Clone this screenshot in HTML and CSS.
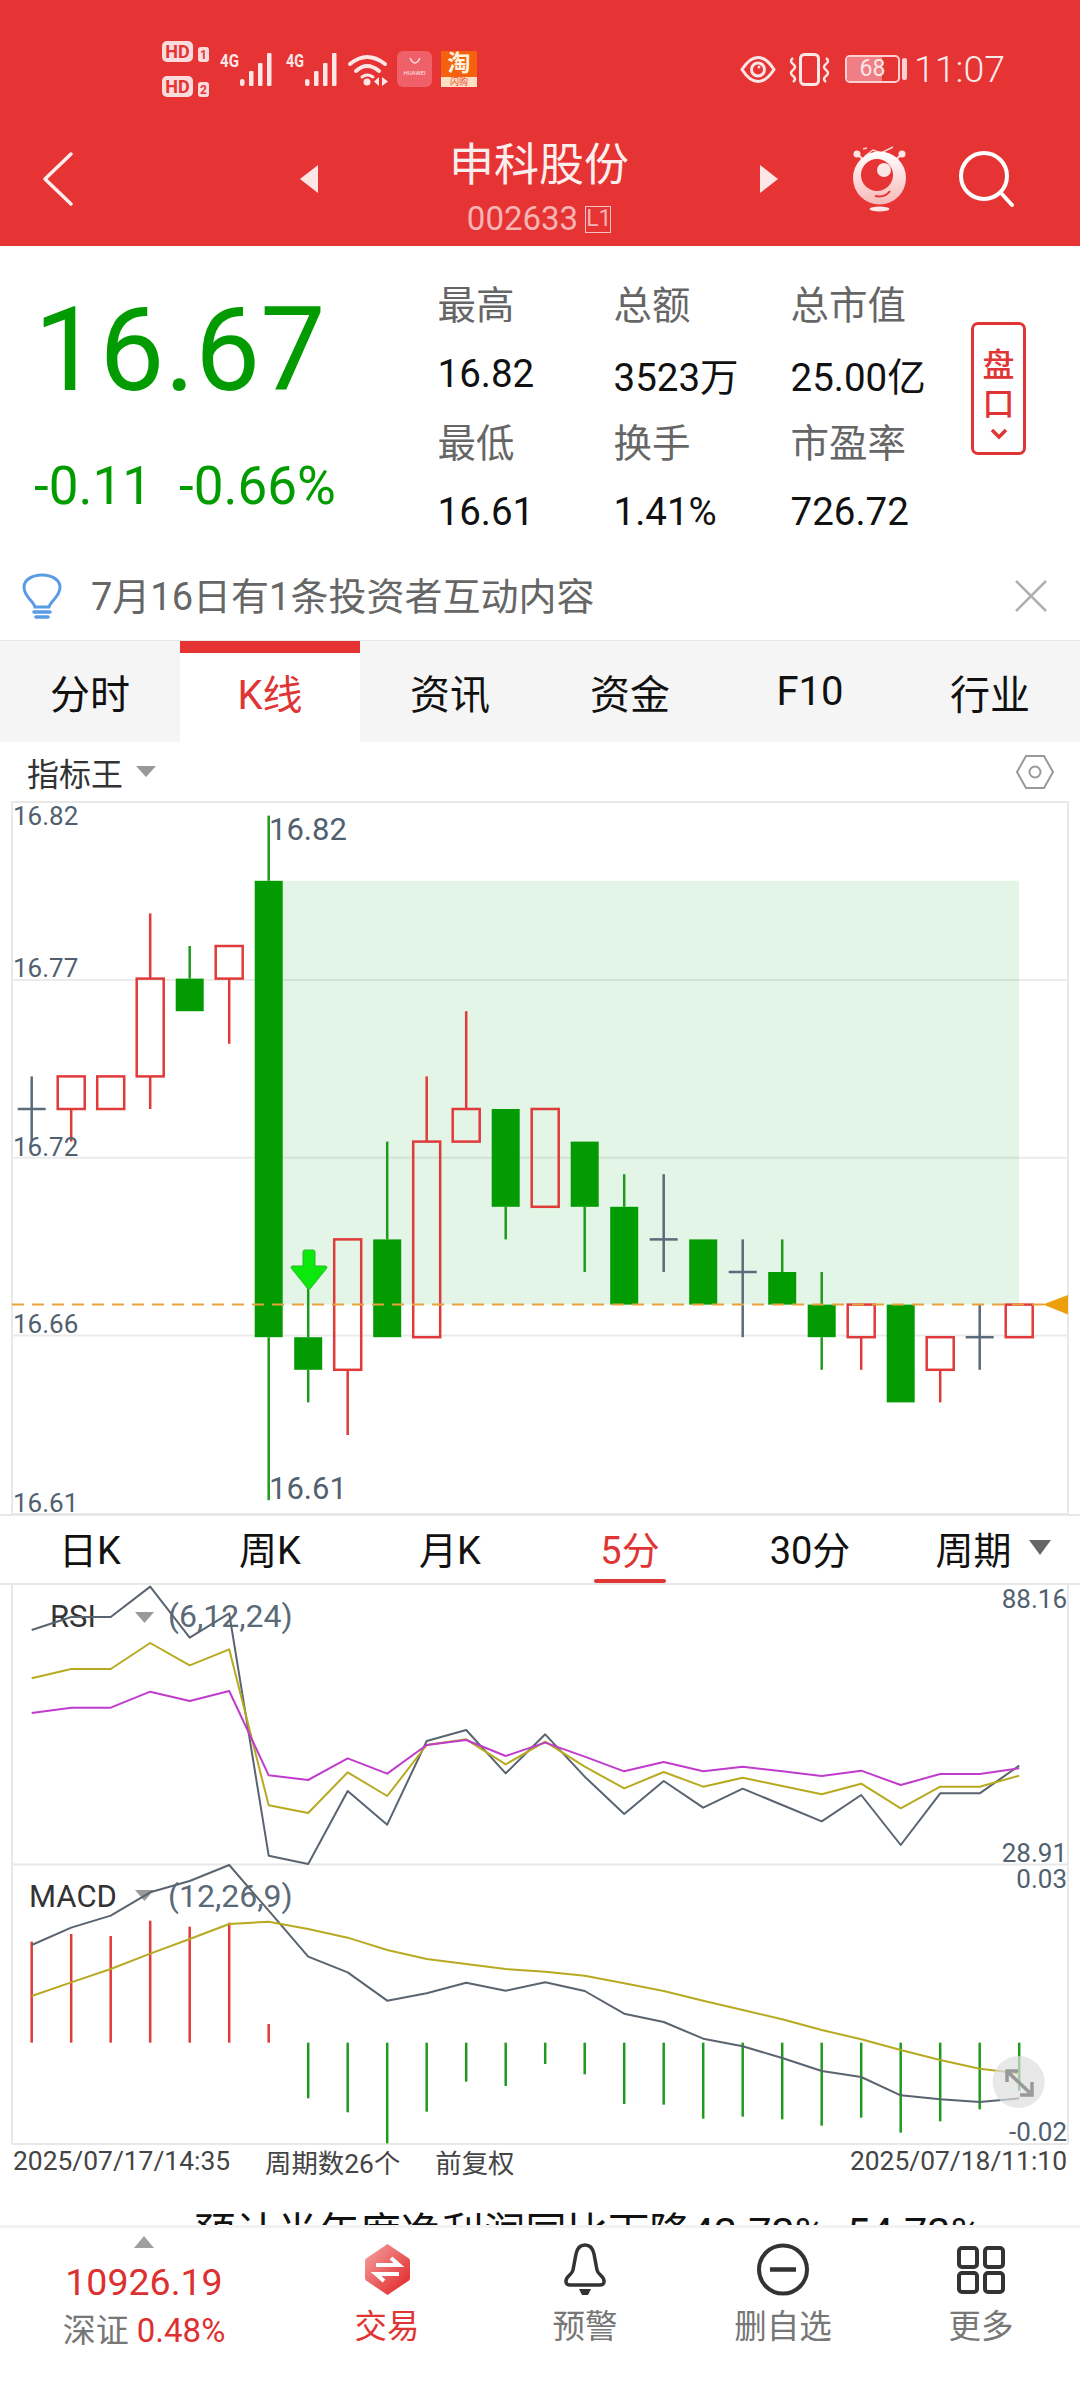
FILE: index.html
```html
<!DOCTYPE html>
<html>
  <head>
    <title>申科股份</title>
    <link rel="stylesheet" href="styles.css">
  </head>
  <body>
    <header class="top">
      <div class="status">
        <svg class="hd" width="47" height="56" viewBox="0 0 47 56">
          <rect width="31" height="21" rx="5" fill="#fbdcdc"/>
          <text x="15.5" y="17" class="hd-text">HD</text>
          <rect x="36" y="6" width="11" height="15" rx="3" fill="#fbdcdc"/>
          <text x="41.5" y="18" class="hd-num">1</text>
          <rect y="35" width="31" height="21" rx="5" fill="#fbdcdc"/>
          <text x="15.5" y="52" class="hd-text">HD</text>
          <rect x="36" y="41" width="11" height="15" rx="3" fill="#fbdcdc"/>
          <text x="41.5" y="53" class="hd-num">2</text>
        </svg>
        <svg class="sig-a" width="54" height="33" viewBox="0 0 54 33">
          <text x="0" y="14" class="four-g" textLength="19" lengthAdjust="spacingAndGlyphs">4G</text>
          <rect x="20" y="26" width="4.500" height="7" rx="2" fill="#fde6e6"/>
          <rect x="29" y="18" width="4.500" height="15" rx="1" fill="#fde6e6"/>
          <rect x="38" y="10" width="4.500" height="23" rx="1" fill="#fde6e6"/>
          <rect x="47" y="0" width="4.500" height="33" rx="1" fill="#fde6e6"/>
        </svg>
        <svg class="sig-b" width="53" height="33" viewBox="0 0 53 33">
          <text x="0" y="14" class="four-g" textLength="18" lengthAdjust="spacingAndGlyphs">4G</text>
          <rect x="19" y="26" width="4.500" height="7" rx="2" fill="#fde6e6"/>
          <rect x="28" y="18" width="4.500" height="15" rx="1" fill="#fde6e6"/>
          <rect x="37" y="10" width="4.500" height="23" rx="1" fill="#fde6e6"/>
          <rect x="46" y="0" width="4.500" height="33" rx="1" fill="#fde6e6"/>
        </svg>
        <svg class="wifi" width="41" height="33" viewBox="0 0 41 33" fill="none" stroke="#fde6e6" stroke-width="4" stroke-linecap="round">
          <path d="M2 11Q19 -3 37 11"/>
          <path d="M8 18Q19 8 31 18"/>
          <path d="M14 24Q19 20 25 24" stroke-width="3"/>
          <circle cx="19" cy="29" r="3.5" fill="#fde6e6" stroke="none"/>
          <path d="M31 24v9l-5-4.500zM34 24v9l6-4.500z" fill="#fde6e6" stroke="none"/>
        </svg>
        <div class="app-huawei">
          <svg width="14" height="8" viewBox="0 0 14 8" fill="none" stroke="#fde6e6" stroke-width="1.500"><path d="M2 1Q7 11 12 1"/></svg>
          <span>HUAWEI</span>
        </div>
        <div class="app-tao">
          <span class="tao-main">淘</span>
          <span class="tao-sub">闪购</span>
        </div>
        <div class="status-right">
          <svg width="36" height="27" viewBox="0 0 36 27" fill="none" stroke="#fde6e6" stroke-width="3">
            <path d="M2 13.500C8 4 14 1.500 18 1.500C22 1.500 28 4 34 13.500C28 23 22 25.500 18 25.500C14 25.500 8 23 2 13.500Z"/>
            <circle cx="18" cy="13.500" r="6.500"/>
            <circle cx="19" cy="11" r="1.500" fill="#fde6e6" stroke="none"/>
          </svg>
          <svg class="vib" width="43" height="33" viewBox="0 0 43 33" fill="none" stroke="#fde6e6" stroke-width="3">
            <rect x="12.500" y="1.500" width="18" height="30" rx="4"/>
            <path d="M5 5q-4 3 0 6t0 6t0 6t0 6" stroke-width="2.500"/>
            <path d="M38 5q4 3 0 6t0 6t0 6t0 6" stroke-width="2.500"/>
          </svg>
          <div class="battery">
            <div class="battery-body"><span class="battery-fill"></span><span class="battery-num">68</span></div>
            <span class="battery-nub"></span>
          </div>
          <span class="clock">11:07</span>
        </div>
      </div>
      <div class="nav">
        <svg class="back" width="30" height="54" viewBox="0 0 30 54" fill="none" stroke="#fdeeee" stroke-width="3.500" stroke-linecap="round" stroke-linejoin="round">
          <path d="M28 2L2 27L28 52"/>
        </svg>
        <span class="tri tri-left"></span>
        <div class="title-block">
          <div class="title">申科股份</div>
          <div class="code">002633<span class="level">L1</span></div>
        </div>
        <span class="tri tri-right"></span>
        <svg class="mascot" width="53" height="67" viewBox="0 0 53 67">
          <defs>
            <linearGradient id="mascotBody" x1="0" y1="0" x2="0" y2="1">
              <stop offset="0" stop-color="#ffffff"/>
              <stop offset="1" stop-color="#f8b8b8"/>
            </linearGradient>
          </defs>
          <path d="M10 3L14 2M12 10L20 4L28 7L40 1" fill="none" stroke="#fbd5d5" stroke-width="1.500"/>
          <path d="M4 8L13 16M49 8L40 16" stroke="#fde0e0" stroke-width="2"/>
          <circle cx="4" cy="8" r="3.500" fill="#fde6e6"/>
          <circle cx="49" cy="8" r="3.500" fill="#fde6e6"/>
          <circle cx="26.500" cy="32" r="26.500" fill="url(#mascotBody)"/>
          <circle cx="24" cy="29" r="16" fill="#e63333"/>
          <circle cx="31" cy="24" r="7" fill="#fde6e6"/>
          <path d="M22 50Q32 52 37 45" fill="none" stroke="#e63333" stroke-width="2"/>
          <ellipse cx="26.500" cy="63" rx="10" ry="2.500" fill="#fde6e6"/>
        </svg>
        <svg class="search" width="55" height="56" viewBox="0 0 55 56" fill="none" stroke="#fff" stroke-width="4" stroke-linecap="round">
          <circle cx="25" cy="25" r="23"/>
          <path d="M42 42L53 54"/>
        </svg>
      </div>
    </header>

    <section class="quote">
      <div class="price-col">
        <div class="price">16.67</div>
        <div class="delta"><span>-0.11</span><span class="delta-pct">-0.66%</span></div>
      </div>
      <div class="stats">
        <span class="stat-label">最高</span><span class="stat-label">总额</span><span class="stat-label">总市值</span>
        <span class="stat-value">16.82</span><span class="stat-value">3523万</span><span class="stat-value">25.00亿</span>
        <span class="stat-label">最低</span><span class="stat-label">换手</span><span class="stat-label">市盈率</span>
        <span class="stat-value">16.61</span><span class="stat-value">1.41%</span><span class="stat-value">726.72</span>
      </div>
      <div class="pankou">
        <span>盘</span>
        <span>口</span>
        <svg width="18" height="12" viewBox="0 0 18 12" fill="none" stroke="#e03535" stroke-width="3.500"><path d="M2 2L9 9L16 2"/></svg>
      </div>
    </section>

    <section class="notice">
      <svg width="40" height="46" viewBox="0 0 40 46" fill="none" stroke="#5a9be6" stroke-width="3" stroke-linecap="round">
        <path d="M13 34C11 27 2 24 2 14C2 7 10 2 20 2C30 2 38 7 38 14C38 24 29 27 27 34Z"/>
        <path d="M12 39H28M14 44H26" stroke-width="3.500"/>
      </svg>
      <span class="notice-text">7月16日有1条投资者互动内容</span>
      <svg class="notice-close" width="32" height="30" viewBox="0 0 32 30" stroke="#b0b0b0" stroke-width="2.500"><path d="M1 0L31 30M31 0L1 30"/></svg>
    </section>

    <nav class="tabs">
      <a class="tab">分时</a>
      <a class="tab active">K线</a>
      <a class="tab">资讯</a>
      <a class="tab">资金</a>
      <a class="tab">F10</a>
      <a class="tab">行业</a>
    </nav>

    <div class="toolbar">
      <span>指标王</span>
      <span class="caret"></span>
      <svg class="hex" width="38" height="34" viewBox="0 0 38 34" fill="none" stroke="#999" stroke-width="2">
        <path d="M10 1H28L37 17L28 33H10L1 17Z"/>
        <circle cx="19" cy="17" r="5.500"/>
      </svg>
    </div>

    <div class="chart"><svg id="klineChart" width="1080" height="713" viewBox="0 801 1080 713"></svg></div>

    <div class="periods">
      <a class="period">日K</a>
      <a class="period">周K</a>
      <a class="period">月K</a>
      <a class="period active">5分</a>
      <a class="period">30分</a>
      <a class="period period-more">周期<span class="period-caret"></span></a>
    </div>

    <div class="panel"><svg id="rsiChart" width="1080" height="280" viewBox="0 1585 1080 280"></svg></div>
    <div class="panel"><svg id="macdChart" width="1080" height="279" viewBox="0 1865 1080 279"></svg></div>

    <div class="dates">
      <span>2025/07/17/14:35</span>
      <span class="dates-count">周期数26个</span>
      <span class="dates-fq">前复权</span>
      <span class="dates-end">2025/07/18/11:10</span>
    </div>

    <div class="news"><span>预计半年度净利润同比下降43.73%- 54.73%</span></div>

    <footer class="bottom">
      <div class="index">
        <span class="index-tri"></span>
        <div class="index-value">10926.19</div>
        <div class="index-name">深证 <span>0.48%</span></div>
      </div>
      <a class="bottom-item active">
        <svg width="47" height="53" viewBox="0 0 47 53">
          <defs>
            <linearGradient id="tradeFill" x1="0" y1="0" x2="1" y2="1">
              <stop offset="0" stop-color="#f5a5a5"/>
              <stop offset="1" stop-color="#e01f1f"/>
            </linearGradient>
          </defs>
          <path d="M23.500 1L45 15.500A4 4 0 0 1 46 18V35A4 4 0 0 1 45 37.500L23.500 52L2 37.500A4 4 0 0 1 1 35V18A4 4 0 0 1 2 15.500Z" fill="url(#tradeFill)"/>
          <path d="M12 22H35L27 15M35 31H12L20 38" fill="none" stroke="#fff" stroke-width="4"/>
        </svg>
        <span>交易</span>
      </a>
      <a class="bottom-item">
        <svg width="44" height="53" viewBox="0 0 44 53" fill="none" stroke="#333" stroke-width="3.500" stroke-linejoin="round">
          <path d="M22 2C27 2 30 6 31 11L34 27C35 32 41 33 41 38V39C41 41 39 42 37 42H7C5 42 3 41 3 39V38C3 33 9 32 10 27L13 11C14 6 17 2 22 2Z"/>
          <path d="M16 46H28L25 52H19Z" fill="#333" stroke="none"/>
        </svg>
        <span>预警</span>
      </a>
      <a class="bottom-item">
        <svg width="52" height="53" viewBox="0 0 52 53" fill="none" stroke="#333" stroke-width="4">
          <circle cx="26" cy="26.500" r="24"/>
          <path d="M13 26.500H39" stroke-width="4.500"/>
        </svg>
        <span>删自选</span>
      </a>
      <a class="bottom-item">
        <svg width="48" height="53" viewBox="0 0 48 53" fill="none" stroke="#333" stroke-width="4">
          <rect x="2" y="5" width="18" height="19" rx="3"/>
          <rect x="28" y="5" width="18" height="19" rx="3"/>
          <rect x="2" y="30" width="18" height="19" rx="3"/>
          <rect x="28" y="30" width="18" height="19" rx="3"/>
        </svg>
        <span>更多</span>
      </a>
    </footer>
    <script src="chart.js"></script>
  </body>
</html>
```

FILE: styles.css
```css
* {
  margin: 0;
  padding: 0;
  box-sizing: border-box;
}

html, body {
  height: 100%;
  overflow: hidden;
}

body {
  font-family: Roboto, 'Noto Sans CJK SC', sans-serif;
  width: 1080px;
  height: 2400px;
  background: #fff;
  color: #111;
  display: flex;
  flex-direction: column;
}

svg {
  display: block;
  flex-shrink: 0;
  overflow: visible;
}

/* red header */
.top {
  height: 246px;
  background: #e63333;
  flex-shrink: 0;
}

.status {
  height: 112px;
  padding: 26px 75px 0 162px;
  display: flex;
  align-items: center;
}

.hd-text {
  font: 700 18px Roboto, sans-serif;
  fill: #e63333;
  text-anchor: middle;
}

.hd-num {
  font: 700 12px Roboto, sans-serif;
  fill: #e63333;
  text-anchor: middle;
}

.four-g {
  font: 700 18px Roboto, sans-serif;
  fill: #fde6e6;
}

.sig-a {
  margin-left: 11px;
}

.sig-b {
  margin-left: 12px;
}

.wifi {
  margin-left: 9px;
}

.app-huawei {
  width: 35px;
  height: 36px;
  margin-left: 8px;
  border-radius: 6px;
  background: #ef6068;
  display: flex;
  flex-direction: column;
  align-items: center;
  color: #fde6e6;
  padding-top: 6px;
}

.app-huawei span {
  font-size: 6px;
  line-height: 10px;
  margin-top: 3px;
  white-space: nowrap;
}

.app-tao {
  width: 36px;
  height: 36px;
  margin-left: 9px;
  background: #f4610f;
  display: flex;
  flex-direction: column;
  align-items: center;
  overflow: hidden;
}

.tao-main {
  font-size: 23px;
  line-height: 26px;
  font-weight: 700;
  color: #fff3dd;
}

.tao-sub {
  width: 100%;
  height: 10px;
  background: #fde0c5;
  color: #e64a2a;
  font-size: 9px;
  line-height: 10px;
  text-align: center;
}

.status-right {
  margin-left: auto;
  display: flex;
  align-items: center;
}

.vib {
  margin-left: 12px;
}

.battery {
  margin-left: 14px;
  display: flex;
  align-items: center;
}

.battery-body {
  width: 55px;
  height: 28px;
  border: 2px solid #fbd0d0;
  border-radius: 5px;
  position: relative;
  overflow: hidden;
}

.battery-fill {
  display: block;
  width: 68%;
  height: 100%;
  background: #ef7f85;
}

.battery-num {
  position: absolute;
  inset: 0;
  text-align: center;
  font-size: 23px;
  line-height: 24px;
  color: #fde6e6;
}

.battery-nub {
  width: 5px;
  height: 22px;
  margin-left: 2px;
  border-radius: 2px;
  background: #fbd0d0;
}

.clock {
  margin-left: 7px;
  font-size: 37.5px;
  font-weight: 300;
  color: #fdeaea;
}

.nav {
  height: 134px;
  padding-left: 43px;
  display: flex;
  align-items: center;
}

.tri {
  width: 0;
  height: 0;
  border-top: 14px solid transparent;
  border-bottom: 14px solid transparent;
}

.tri-left {
  margin-left: 227px;
  border-right: 18px solid #fde6e6;
}

.tri-right {
  border-left: 18px solid #fde6e6;
}

.title-block {
  width: 442px;
  align-self: flex-start;
  padding-top: 28px;
  display: flex;
  flex-direction: column;
  align-items: center;
}

.title {
  font-size: 45px;
  line-height: 52px;
  color: #fdeeee;
}

.code {
  margin-top: 8px;
  font-size: 33px;
  line-height: 38px;
  color: #f6b4b4;
  display: flex;
  align-items: center;
}

.level {
  margin-left: 7px;
  width: 26px;
  height: 27px;
  border: 1.500px solid #f6c4c4;
  font-size: 23px;
  line-height: 24px;
  text-align: center;
}

.mascot {
  margin-left: 75px;
}

.search {
  margin-left: 53px;
}

/* price block */
.quote {
  height: 306px;
  display: flex;
  flex-shrink: 0;
}

.price-col {
  width: 437.5px;
  padding: 33px 0 0 34px;
  color: #029c02;
}

.price {
  font-size: 116px;
  line-height: 142px;
  white-space: nowrap;
}

.delta {
  margin-top: 35px;
  font-size: 53px;
  line-height: 60px;
  white-space: nowrap;
}

.delta-pct {
  margin-left: 27px;
}

.stats {
  width: 533.5px;
  padding-top: 24px;
  display: grid;
  grid-template-columns: 176px 177px 180.5px;
  grid-auto-rows: 69px;
  align-items: center;
  font-size: 38.5px;
}

.stat-label {
  color: #666;
  margin-bottom: 5px;
}

.stat-value {
  color: #111;
  white-space: nowrap;
}

.pankou {
  width: 55px;
  height: 133px;
  margin-top: 76px;
  padding-top: 21px;
  border: 3px solid #e03535;
  border-radius: 7px;
  display: flex;
  flex-direction: column;
  align-items: center;
  font-size: 32px;
  line-height: 39px;
  font-weight: 500;
  color: #e03535;
}

.pankou svg {
  margin-top: 4px;
}

/* investor notice */
.notice {
  height: 88px;
  padding: 0 33px 0 22px;
  display: flex;
  align-items: center;
  flex-shrink: 0;
}

.notice-text {
  margin: 0 0 5px 29px;
  font-size: 38px;
  color: #666;
}

.notice-close {
  margin-left: auto;
}

/* main tabs */
.tabs {
  height: 102px;
  display: flex;
  flex-shrink: 0;
  background: #f5f5f5;
  border-top: 1px solid #e8e8e8;
}

.tab {
  width: 180px;
  display: flex;
  align-items: center;
  justify-content: center;
  font-size: 40px;
  color: #111;
}

.tab.active {
  background: #fff;
  box-shadow: inset 0 12px 0 #e63333;
  color: #e03535;
}

.toolbar {
  height: 59px;
  padding: 0 26px 0 27px;
  display: flex;
  align-items: center;
  flex-shrink: 0;
  font-size: 32px;
  color: #333;
}

.caret {
  width: 0;
  height: 0;
  margin-left: 13px;
  border-left: 10px solid transparent;
  border-right: 10px solid transparent;
  border-top: 11px solid #999;
}

.hex {
  margin-left: auto;
}

.chart, .panel {
  flex-shrink: 0;
}

/* period switch */
.periods {
  height: 71px;
  display: flex;
  flex-shrink: 0;
  border-top: 2px solid #e8e8e8;
  border-bottom: 2px solid #e8e8e8;
}

.period {
  width: 180px;
  padding-bottom: 5px;
  display: flex;
  align-items: center;
  justify-content: center;
  font-size: 38px;
  color: #111;
  position: relative;
}

.period-more {
  padding-left: 6px;
}

.period.active {
  color: #e03535;
}

.period.active::after {
  content: '';
  position: absolute;
  left: 54px;
  bottom: 0;
  width: 72px;
  height: 4px;
  border-radius: 2px;
  background: #e03535;
}

.period-caret {
  width: 0;
  height: 0;
  margin-left: 17px;
  border-left: 11px solid transparent;
  border-right: 11px solid transparent;
  border-top: 15px solid #666;
}

/* chart svg text */
.axis {
  font: 26px Roboto, sans-serif;
  fill: #51606f;
}

.axis-big {
  font: 31px Roboto, sans-serif;
  fill: #51606f;
}

.ind-name {
  font: 31px Roboto, sans-serif;
  fill: #333;
}

.ind-args {
  font: 32px Roboto, sans-serif;
  fill: #5a6a78;
}

.dates {
  height: 34px;
  padding: 0 13px;
  display: flex;
  align-items: center;
  flex-shrink: 0;
  font-size: 26.4px;
  color: #444;
  white-space: nowrap;
}

.dates-count {
  margin-left: 35px;
}

.dates-fq {
  margin-left: 35px;
}

.dates-end {
  margin-left: auto;
}

.news {
  height: 47px;
  padding: 30px 0 0 194px;
  overflow: hidden;
  flex-shrink: 0;
  font-size: 41.4px;
  line-height: 50px;
  color: #111;
  white-space: nowrap;
}

/* bottom bar */
.bottom {
  height: 175px;
  border-top: 3px solid #f2f2f2;
  display: flex;
  flex-shrink: 0;
  background: #fff;
}

.index {
  width: 288px;
  padding-top: 8px;
  display: flex;
  flex-direction: column;
  align-items: center;
}

.index-tri {
  width: 0;
  height: 0;
  border-left: 10px solid transparent;
  border-right: 10px solid transparent;
  border-bottom: 12px solid #a0a0a0;
}

.index-value {
  margin-top: 12px;
  font-size: 37.5px;
  line-height: 44px;
  color: #dd3030;
}

.index-name {
  margin-top: 5px;
  font-size: 33px;
  line-height: 44px;
  color: #777;
  white-space: nowrap;
}

.index-name span {
  color: #dd3030;
}

.bottom-item {
  width: 198px;
  padding-top: 15px;
  display: flex;
  flex-direction: column;
  align-items: center;
  font-size: 32.5px;
  line-height: 40px;
  color: #777;
}

.bottom-item span {
  margin-top: 11px;
}

.bottom-item.active {
  color: #e03535;
}
```

FILE: chart.js
```js
const NS = 'http://www.w3.org/2000/svg';
const RED = '#e03a3a';
const GREEN = '#029c02';
const WICK_GREEN = '#1f9a1f';
const DOJI = '#5a6b7a';
const BORDER = '#e8e8e8';

function add(svg, tag, attrs, text) {
  const el = document.createElementNS(NS, tag);
  for (const key in attrs) el.setAttribute(key, attrs[key]);
  if (text) el.textContent = text;
  svg.appendChild(el);
  return el;
}

function hline(svg, x1, x2, y, color, width) {
  add(svg, 'line', { x1: x1, x2: x2, y1: y, y2: y, stroke: color, 'stroke-width': width });
}

function vline(svg, x, y1, y2, color, width) {
  add(svg, 'line', { x1: x, x2: x, y1: y1, y2: y2, stroke: color, 'stroke-width': width });
}

function label(svg, x, y, cls, text, anchor) {
  add(svg, 'text', { x: x, y: y, class: cls, 'text-anchor': anchor || 'start' }, text);
}

function caret(svg, y) {
  add(svg, 'path', { d: `M135 ${y}H154L144.500 ${y + 11}Z`, fill: '#999' });
}

const barX = i => 31.7 + 39.5 * i;
const tickY = k => 815.6 + 32.6 * k;

// [colour, body top, body bottom, high, low] in ticks below 16.82
const candles = [
  ['d', 9, 9, 8, 10], ['r', 8, 9, 8, 10], ['r', 8, 9, 8, 9], ['r', 5, 8, 3, 9],
  ['g', 5, 6, 4, 6], ['r', 4, 5, 4, 7], ['g', 2, 16, 0, 21], ['g', 16, 17, 14, 18],
  ['r', 13, 17, 13, 19], ['g', 13, 16, 10, 16], ['r', 10, 16, 8, 16], ['r', 9, 10, 6, 10],
  ['g', 9, 12, 9, 13], ['r', 9, 12, 9, 12], ['g', 10, 12, 10, 14], ['g', 12, 15, 11, 15],
  ['d', 13, 13, 11, 14], ['g', 13, 15, 13, 15], ['d', 14, 14, 13, 16], ['g', 14, 15, 13, 15],
  ['g', 15, 16, 14, 17], ['r', 15, 16, 15, 17], ['g', 15, 18, 15, 18], ['r', 16, 17, 16, 18],
  ['d', 16, 16, 15, 17], ['r', 15, 16, 15, 16]
];

function drawKline(svg) {
  add(svg, 'rect', { x: 12, y: 802, width: 1056, height: 712, fill: 'none', stroke: BORDER, 'stroke-width': 2 });
  [980, 1157.8, 1335.6].forEach(y => hline(svg, 12, 1068, y, '#ebebeb', 2));
  add(svg, 'rect', { x: 282, y: tickY(2), width: 737, height: tickY(15) - tickY(2), fill: 'rgba(20,170,50,0.12)' });

  candles.forEach((c, i) => {
    const x = barX(i);
    const top = tickY(c[1]);
    const bottom = tickY(c[2]);
    if (c[0] === 'd') {
      vline(svg, x, tickY(c[3]), tickY(c[4]), DOJI, 2.5);
      hline(svg, x - 14, x + 14, top, DOJI, 2.5);
      return;
    }
    const wick = c[0] === 'r' ? RED : WICK_GREEN;
    if (c[3] < c[1]) vline(svg, x, tickY(c[3]), top, wick, 2.5);
    if (c[4] > c[2]) vline(svg, x, bottom, tickY(c[4]), wick, 2.5);
    if (c[0] === 'r') {
      add(svg, 'rect', { x: x - 13.5, y: top, width: 27, height: bottom - top, fill: 'none', stroke: RED, 'stroke-width': 2.5 });
    } else {
      add(svg, 'rect', { x: x - 14, y: top, width: 28, height: bottom - top, fill: GREEN });
    }
  });

  add(svg, 'line', { x1: 12, x2: 1046, y1: 1304.4, y2: 1304.4, stroke: '#e9a23b', 'stroke-width': 2, 'stroke-dasharray': '12 8' });
  add(svg, 'path', { d: 'M1043 1304.500L1068 1295V1314.500Z', fill: '#ec9f0a' });
  add(svg, 'path', { d: 'M303 1252Q303 1250 305 1250H313Q315 1250 315 1252V1266H326Q328 1267 326 1269L310 1289H308L292 1269Q290 1267 292 1266H303Z', fill: '#0ce80c', stroke: '#2bb52b', 'stroke-width': 1 });

  label(svg, 13, 825, 'axis', '16.82');
  label(svg, 13, 977, 'axis', '16.77');
  label(svg, 13, 1155.5, 'axis', '16.72');
  label(svg, 13, 1333, 'axis', '16.66');
  label(svg, 13, 1511.5, 'axis', '16.61');
  label(svg, 269, 840, 'axis-big', '16.82');
  label(svg, 269, 1498.5, 'axis-big', '16.61');
}

function polyline(svg, ys, color) {
  const points = ys.map((y, i) => barX(i) + ',' + y).join(' ');
  add(svg, 'polyline', { points: points, fill: 'none', stroke: color, 'stroke-width': 2, 'stroke-linejoin': 'round' });
}

function drawRsi(svg) {
  const toY = z => 1510 + z / 3;
  const gray = [360, 321, 321, 230, 383, 310, 1037, 1062, 843, 944, 693, 660, 790, 673, 800, 912, 813, 893, 836, 885, 934, 855, 1005, 850, 850, 767];
  const yellow = [505, 477, 477, 399, 466, 418, 886, 909, 787, 858, 705, 688, 763, 695, 770, 835, 786, 830, 803, 828, 853, 821, 895, 830, 830, 797];
  const purple = [609, 593, 593, 545, 573, 543, 796, 810, 745, 791, 705, 690, 738, 698, 740, 784, 756, 784, 770, 784, 798, 782, 825, 792, 792, 775];

  vline(svg, 12, 1585, 1865, BORDER, 2);
  vline(svg, 1068, 1585, 1865, BORDER, 2);
  hline(svg, 12, 1068, 1864.5, BORDER, 2);

  label(svg, 50, 1627, 'ind-name', 'RSI');
  caret(svg, 1612);
  label(svg, 168, 1627, 'ind-args', '(6,12,24)');
  polyline(svg, gray.map(toY), '#5a6470');
  polyline(svg, yellow.map(toY), '#b8aa20');
  polyline(svg, purple.map(toY), '#c03ccc');
  label(svg, 1067, 1608, 'axis', '88.16', 'end');
  label(svg, 1067, 1861.5, 'axis', '28.91', 'end');
}

function drawMacd(svg) {
  const toY = z => 1850 + z / 3;
  const gray = [285, 233, 197, 127, 93, 45, 182, 320, 367, 452, 430, 398, 422, 397, 423, 491, 516, 566, 589, 624, 663, 681, 736, 748, 756, 745];
  const yellow = [438, 397, 357, 311, 267, 222, 215, 237, 263, 300, 327, 342, 357, 365, 377, 400, 423, 452, 480, 508, 540, 568, 600, 630, 656, 670];
  const bars = [275, 252, 258, 212, 230, 218, 522, 745, 787, 880, 785, 695, 708, 642, 673, 762, 764, 806, 800, 808, 827, 803, 848, 814, 778, 722];
  const zero = 578;

  vline(svg, 12, 1865, 2144, BORDER, 2);
  vline(svg, 1068, 1865, 2144, BORDER, 2);
  hline(svg, 12, 1068, 2144, BORDER, 2);

  bars.forEach((z, i) => vline(svg, barX(i), toY(zero), toY(z), z < zero ? RED : WICK_GREEN, 2.5));

  label(svg, 29, 1906.5, 'ind-name', 'MACD');
  caret(svg, 1890);
  label(svg, 168, 1906.5, 'ind-args', '(12,26,9)');
  polyline(svg, gray.map(toY), '#5a6470');
  polyline(svg, yellow.map(toY), '#b8aa20');
  label(svg, 1067, 1887.5, 'axis', '0.03', 'end');
  label(svg, 1067, 2141, 'axis', '-0.02', 'end');

  add(svg, 'circle', { cx: 1018.6, cy: 2082, r: 26, fill: 'rgba(222,222,222,0.7)' });
  add(svg, 'path', {
    d: 'M1009 2073L1030 2093M1007 2082V2071H1018M1032 2082V2095H1020',
    fill: 'none', stroke: '#999', 'stroke-width': 3.5
  });
}

drawKline(document.getElementById('klineChart'));
drawRsi(document.getElementById('rsiChart'));
drawMacd(document.getElementById('macdChart'));
```
